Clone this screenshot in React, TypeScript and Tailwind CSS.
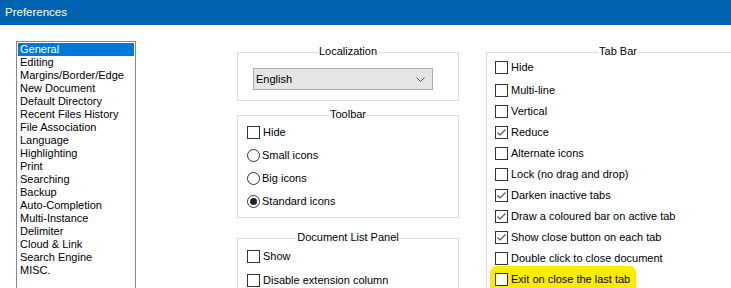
import React from "react";

const pages = [
  "General",
  "Editing",
  "Margins/Border/Edge",
  "New Document",
  "Default Directory",
  "Recent Files History",
  "File Association",
  "Language",
  "Highlighting",
  "Print",
  "Searching",
  "Backup",
  "Auto-Completion",
  "Multi-Instance",
  "Delimiter",
  "Cloud & Link",
  "Search Engine",
  "MISC.",
];

const tabBar = [
  { label: "Hide", checked: false },
  { label: "Multi-line", checked: false },
  { label: "Vertical", checked: false },
  { label: "Reduce", checked: true },
  { label: "Alternate icons", checked: false },
  { label: "Lock (no drag and drop)", checked: false },
  { label: "Darken inactive tabs", checked: true },
  { label: "Draw a coloured bar on active tab", checked: true },
  { label: "Show close button on each tab", checked: true },
  { label: "Double click to close document", checked: false },
  { label: "Exit on close the last tab", checked: false },
];

const CheckBox = ({ checked }: { checked?: boolean }) => (
  <span className="w-[13px] h-[13px] border border-[#333] bg-white flex items-center justify-center shrink-0">
    {checked && (
      <svg width="11" height="11" viewBox="0 0 11 11">
        <polyline points="1.5,5.5 4,8 9.5,2.5" fill="none" stroke="#555" strokeWidth="1.2" />
      </svg>
    )}
  </span>
);

const Radio = ({ checked }: { checked?: boolean }) => (
  <span className="w-[13px] h-[13px] rounded-full border border-[#333] bg-white flex items-center justify-center shrink-0">
    {checked && <span className="w-[7px] h-[7px] rounded-full bg-[#222]" />}
  </span>
);

const GroupBox = ({ title, className, children }: { title: string; className: string; children?: React.ReactNode }) => (
  <div className={"relative border border-[#dcdcdc] " + className}>
    <div className="absolute -top-[8px] left-0 right-0 flex justify-center">
      <span className="bg-white px-[1px] leading-[13px]">{title}</span>
    </div>
    {children}
  </div>
);

export default function App() {
  return (
    <div className="w-[731px] h-[288px] overflow-hidden bg-white text-black text-[11px] leading-[13px] font-['Liberation_Sans',Arial,sans-serif]">
      <div className="h-[25px] bg-[#0063b1] text-white text-[11.5px] pl-[5px] flex items-center">
        Preferences
      </div>

      <div className="flex items-start">
        {/* page list */}
        <div className="ml-[16px] mt-[16px] w-[120px] h-[260px] shrink-0 border border-[#828790] p-[1px]">
          {pages.map((p, i) => (
            <div
              key={p}
              className={
                i === 0
                  ? "h-[13px] pl-[2px] bg-[#0078d7] text-white"
                  : "h-[13px] pl-[2px]"
              }
            >
              {p}
            </div>
          ))}
        </div>

        {/* middle column */}
        <div className="ml-[101px] mt-[27px] w-[222px] shrink-0 flex flex-col">
          <GroupBox title="Localization" className="h-[49px] pt-[15px] pl-[15px]">
            <div className="w-[180px] h-[22px] bg-[#e5e5e5] border border-[#adadad] flex items-center justify-between pl-[2px] pr-[7px]">
              <span>English</span>
              <svg width="9" height="5" viewBox="0 0 9 5">
                <polyline points="0.5,0.5 4.5,4.5 8.5,0.5" fill="none" stroke="#555" strokeWidth="1" />
              </svg>
            </div>
          </GroupBox>

          <GroupBox title="Toolbar" className="mt-[14px] h-[103px] pt-[5px] pl-[9px]">
            <div className="h-[23px] flex items-center gap-[3px]">
              <CheckBox />
              <span>Hide</span>
            </div>
            <div className="h-[23px] flex items-center gap-[2px]">
              <Radio />
              <span>Small icons</span>
            </div>
            <div className="h-[23px] flex items-center gap-[2px]">
              <Radio />
              <span>Big icons</span>
            </div>
            <div className="h-[23px] flex items-center gap-[2px]">
              <Radio checked />
              <span>Standard icons</span>
            </div>
          </GroupBox>

          <GroupBox title="Document List Panel" className="mt-[20px] h-[80px] pt-[5px] pl-[9px]">
            <div className="h-[24px] flex items-center gap-[3px]">
              <CheckBox />
              <span>Show</span>
            </div>
            <div className="h-[24px] flex items-center gap-[3px]">
              <CheckBox />
              <span>Disable extension column</span>
            </div>
          </GroupBox>
        </div>

        {/* right column */}
        <div className="ml-[27px] mt-[27px] w-[264px] shrink-0">
          <GroupBox title="Tab Bar" className="h-[260px] pt-[4px] pl-[8px]">
            {tabBar.map((t, i) => (
              <div
                key={t.label}
                className={
                  (i === 1 ? "mt-[2px] " : "") +
                  "relative h-[21px] flex items-center gap-[3px]"
                }
              >
                {i === tabBar.length - 1 && (
                  <span className="absolute -left-[5px] -top-[3px] w-[146px] h-[28px] rounded-[7px] bg-[#ffec00]" />
                )}
                <span className="relative flex items-center gap-[3px]">
                  <CheckBox checked={t.checked} />
                  <span>{t.label}</span>
                </span>
              </div>
            ))}
          </GroupBox>
        </div>
      </div>
    </div>
  );
}
